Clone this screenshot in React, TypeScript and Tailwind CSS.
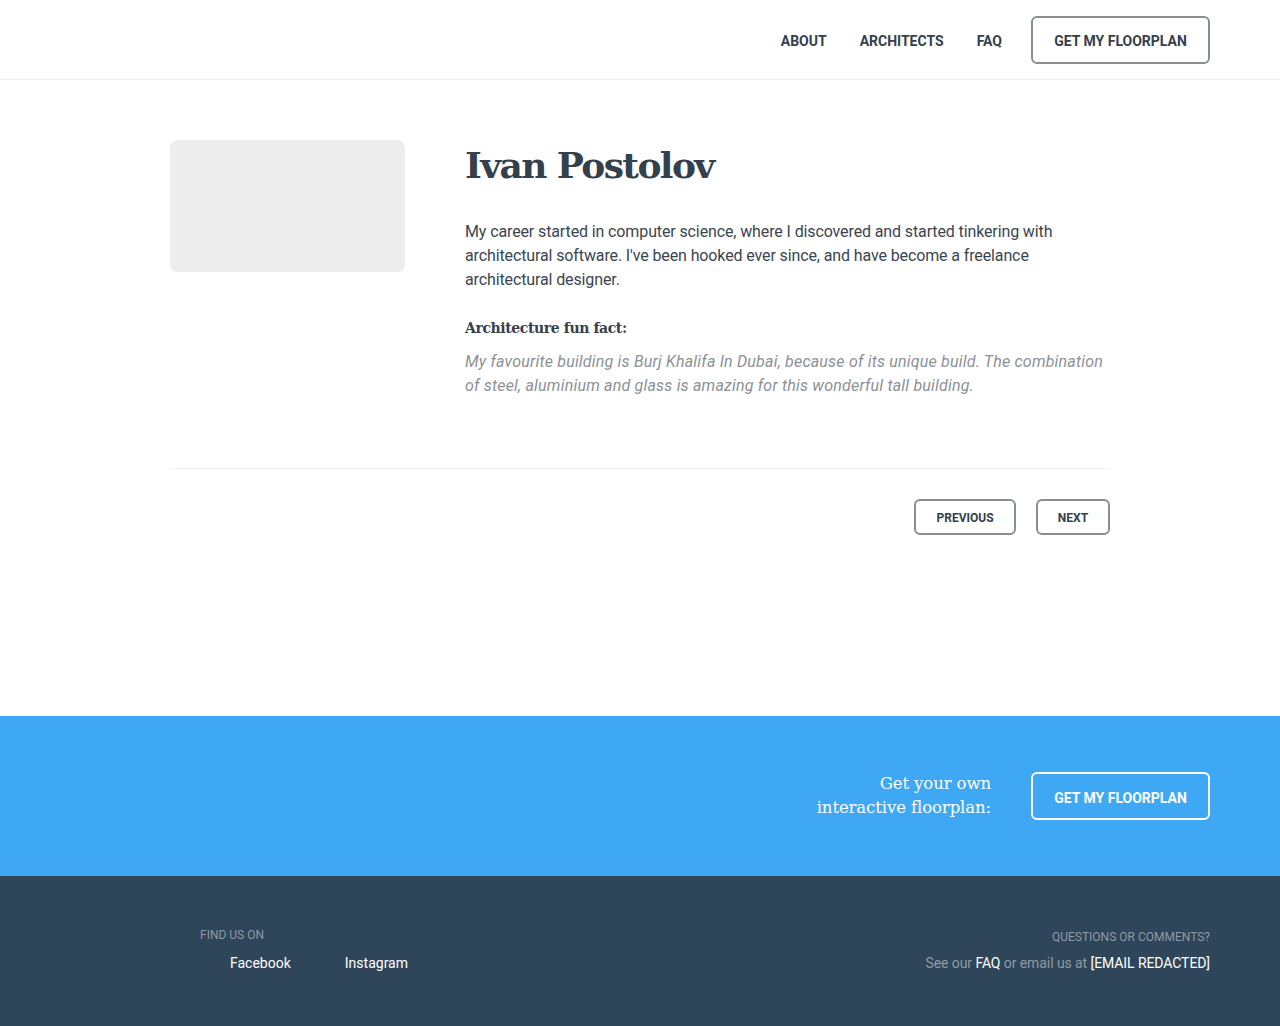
import React from "react";

const serif = { fontFamily: '"DejaVu Serif", "Liberation Serif", serif' };

export default function App() {
  return (
    <div className="min-h-screen bg-white text-[#34404b]" style={{ fontFamily: 'Roboto, "Liberation Sans", sans-serif' }}>
      <header className="h-[80px] border-b border-[#eeeeee] flex items-center justify-end px-[70px]">
        <nav className="flex items-center text-[14px] font-bold text-[#34404b]">
          <a className="mr-[33px] pt-[4px]">ABOUT</a>
          <a className="mr-[33px] pt-[4px]">ARCHITECTS</a>
          <a className="mr-[29px] pt-[4px]">FAQ</a>
          <a className="h-[48px] w-[179px] flex items-center justify-center pt-[4px] border-2 border-[#8a8e92] rounded-[6px]">GET MY FLOORPLAN</a>
        </nav>
      </header>

      <main className="w-[940px] mx-auto pt-[60px] pb-[181px]">
        <div className="flex gap-[60px] pb-[70px]">
          <div className="w-[235px] h-[132px] shrink-0 rounded-[8px] bg-[#ededed]" />
          <div className="flex-1">
            <h1 className="text-[36px] leading-[48px] font-bold tracking-[-1.6px] text-[#34404b] mt-[1px]" style={serif}>
              Ivan Postolov
            </h1>
            <p className="mt-[31px] text-[16px] leading-[24px] tracking-[-0.12px] text-[#3a4550]">
              My career started in computer science, where I discovered and started tinkering with architectural software. I've been hooked ever since, and have become a freelance architectural designer.
            </p>
            <h3 className="mt-[24px] text-[14px] leading-[24px] font-bold tracking-[-0.4px] text-[#34404b]" style={serif}>
              Architecture fun fact:
            </h3>
            <p className="mt-[10px] text-[16px] leading-[24px] italic tracking-[0.2px] text-[#8c9196]">
              My favourite building is Burj Khalifa In Dubai, because of its unique build. The combination of steel, aluminium and glass is amazing for this wonderful tall building.
            </p>
          </div>
        </div>
        <div className="border-t border-[#eeeeee] pt-[30px] flex justify-end gap-[20px]">
          <button className="h-[36px] w-[102px] pt-[2px] border-2 border-[#8a8e92] rounded-[6px] text-[12px] font-bold text-[#34404b]">PREVIOUS</button>
          <button className="h-[36px] w-[74px] pt-[2px] border-2 border-[#8a8e92] rounded-[6px] text-[12px] font-bold text-[#34404b]">NEXT</button>
        </div>
      </main>

      <section className="h-[160px] bg-[#3ea8f4] flex items-center justify-end px-[70px]">
        <p className="text-right text-white text-[16.5px] leading-[24px] tracking-[-0.1px] mr-[40px]" style={serif}>
          Get your own<br />interactive floorplan:
        </p>
        <a className="h-[48px] w-[179px] flex items-center justify-center pt-[4px] border-2 border-white rounded-[6px] text-white text-[14px] font-bold">
          GET MY FLOORPLAN
        </a>
      </section>

      <footer className="h-[150px] bg-[#2f4559] flex justify-between pl-[200px] pr-[70px] pt-[52px]">
        <div>
          <div className="text-[12px] leading-[14px] text-[#8e9aa5]">FIND US ON</div>
          <div className="mt-[13px] flex gap-[54px] pl-[30px] text-[14px] leading-[16px] text-white">
            <a>Facebook</a>
            <a>Instagram</a>
          </div>
        </div>
        <div className="text-right pt-[2px]">
          <div className="text-[12px] leading-[14px] text-[#8e9aa5]">QUESTIONS OR COMMENTS?</div>
          <div className="mt-[11px] text-[14px] leading-[16px] tracking-[-0.08px] text-[#8e9aa5]">
            See our <a className="text-white">FAQ</a> or email us at <a className="text-white">[EMAIL REDACTED]</a>
          </div>
        </div>
      </footer>
    </div>
  );
}
